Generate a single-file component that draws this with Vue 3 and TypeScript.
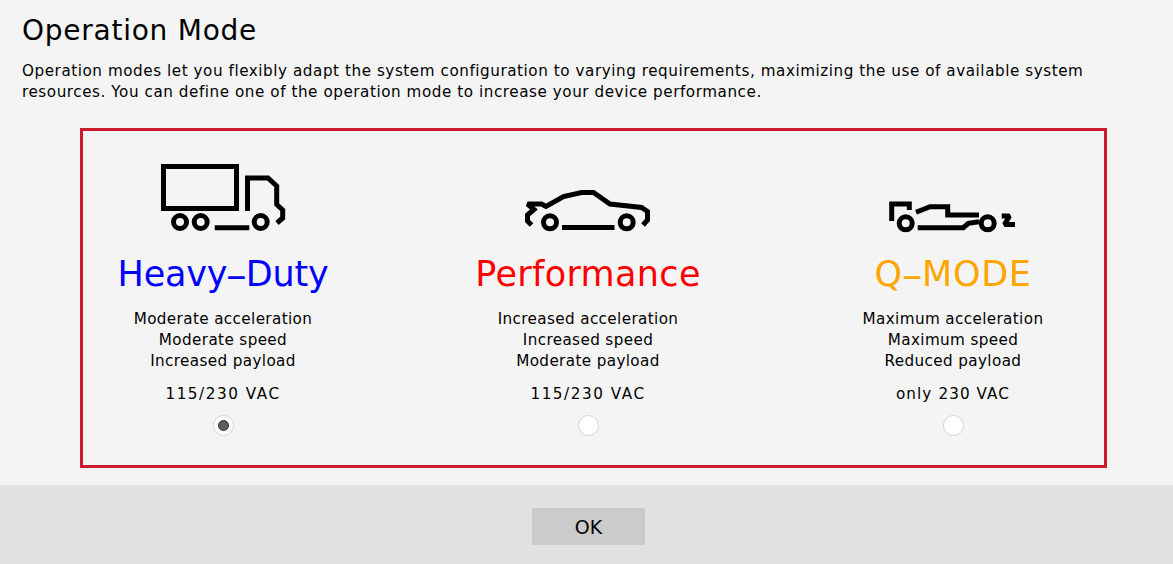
<script setup lang="ts">
interface Mode {
  head: string
  tail: string
  color: string
  nameSpacing: number
  lines: string[]
  power: string
  powerSpacing: number
  selected: boolean
  viewBox: string
  paths: string[]
  wheels: [number, number][]
}

const modes: Mode[] = [
  {
    head: 'Heavy',
    tail: 'Duty',
    color: '#0000ff',
    nameSpacing: -0.2,
    lines: ['Moderate acceleration', 'Moderate speed', 'Increased payload'],
    power: '115/230 VAC',
    powerSpacing: 1.55,
    selected: true,
    viewBox: '143 150 160 90',
    paths: [
      'M163.5 166.5H236.5V208.5H163.5Z',
      'M247.5 211V178H268L276.7 186V204.5L282.7 210V218L277 223',
      'M214.7 227.7H249.3',
    ],
    wheels: [[180, 222], [200.7, 222], [260.7, 222]],
  },
  {
    head: 'Performance',
    tail: '',
    color: '#ff0000',
    nameSpacing: 0.35,
    lines: ['Increased acceleration', 'Increased speed', 'Moderate payload'],
    power: '115/230 VAC',
    powerSpacing: 1.55,
    selected: false,
    viewBox: '508 150 160 90',
    paths: [
      'M531.5 225L527.5 221V215L534 209.5L527.5 204H541.5L546 206.5L563.5 196.5L581.5 192.5H593.5L610 204L641.5 207.5L647.5 211.5V220L643 225',
      'M562 227.5H614.5',
    ],
    wheels: [[550, 222.3], [626.7, 222.3]],
  },
  {
    head: 'Q',
    tail: 'MODE',
    color: '#ffa500',
    nameSpacing: 0.7,
    lines: ['Maximum acceleration', 'Maximum speed', 'Reduced payload'],
    power: 'only 230 VAC',
    powerSpacing: 1.1,
    selected: false,
    viewBox: '873 150 160 90',
    paths: [
      'M891.7 221V204H909.3V210',
      'M916 212.3L930 206.7H947.7V215H979',
      'M917.7 227.7H963.3L968.3 223.3L979 221.7',
      'M1001.7 216H1009.5L1004.5 224.5H1015',
    ],
    wheels: [[905.7, 223.3], [987.7, 223.3]],
  },
]
</script>

<template>
  <div class="page">
    <main class="content">
      <h1 class="title">Operation Mode</h1>
      <p class="intro">
        Operation modes let you flexibly adapt the system configuration to varying requirements, maximizing the use of available system<br />resources. You can define one of the operation mode to increase your device performance.
      </p>
      <section class="modes">
        <article v-for="mode in modes" :key="mode.head" class="mode">
          <svg class="icon" :viewBox="mode.viewBox" width="160" height="90" fill="none" stroke="#000" stroke-width="5" stroke-miterlimit="2" aria-hidden="true">
            <path v-for="d in mode.paths" :key="d" :d="d" />
            <circle v-for="w in mode.wheels" :key="w[0]" :cx="w[0]" :cy="w[1]" r="6.5" />
          </svg>
          <h2 class="name" :style="{ color: mode.color, letterSpacing: mode.nameSpacing + 'px' }">{{ mode.head }}<span v-if="mode.tail" class="dash">-</span>{{ mode.tail }}</h2>
          <ul class="features">
            <li v-for="line in mode.lines" :key="line">{{ line }}</li>
          </ul>
          <div class="power" :style="{ letterSpacing: mode.powerSpacing + 'px' }">{{ mode.power }}</div>
          <span class="radio" :class="{ selected: mode.selected }"></span>
        </article>
      </section>
    </main>
    <footer class="footer">
      <button class="ok" type="button">OK</button>
    </footer>
  </div>
</template>

<style>
html, body { margin: 0; background: #f4f4f4; }
</style>

<style scoped>
.page {
  width: 1173px;
  height: 564px;
  display: flex;
  flex-direction: column;
  background: #f4f4f4;
  color: #000;
  font-family: "DejaVu Sans", sans-serif;
  overflow: hidden;
}
.content {
  flex: 1;
  padding: 12px 22px 0;
}
.title {
  margin: 0;
  font-size: 28px;
  font-weight: 400;
  letter-spacing: 0.75px;
  line-height: 38px;
}
.intro {
  margin: 11px 0 0;
  white-space: nowrap;
  font-size: 15.2px;
  letter-spacing: 0.55px;
  line-height: 21px;
}
.modes {
  box-sizing: border-box;
  width: 1027px;
  height: 340px;
  margin: 25px 0 0 58px;
  border: 3px solid #cc1c2c;
  display: grid;
  grid-template-columns: repeat(3, 280px);
  column-gap: 85px;
}
.mode {
  display: flex;
  flex-direction: column;
  align-items: center;
  padding-top: 19px;
}
.icon { display: block; }
.name {
  margin: 11px 0 0;
  font-size: 35px;
  font-weight: 400;
  line-height: 46px;
}
.dash {
  display: inline-block;
  margin: 0 3px;
  transform: scaleX(1.8) translateY(1px);
}
.features {
  list-style: none;
  margin: 12px 0 0;
  padding: 0;
  text-align: center;
  font-size: 15.2px;
  letter-spacing: 0.38px;
  line-height: 21px;
}
.power {
  margin-top: 12px;
  font-size: 15.2px;
  line-height: 21px;
}
.radio {
  box-sizing: border-box;
  width: 21px;
  height: 21px;
  margin-top: 10px;
  border-radius: 50%;
  background: #fff;
  border: 1px solid #d4d4d4;
  display: flex;
  align-items: center;
  justify-content: center;
}
.radio.selected::after {
  content: "";
  width: 11px;
  height: 11px;
  border-radius: 50%;
  background: #5e5e5e;
  border: 1px solid #333;
  box-sizing: border-box;
}
.footer {
  height: 79px;
  background: #e2e2e2;
  display: flex;
  justify-content: center;
  padding-top: 23px;
  padding-left: 4px;
  box-sizing: border-box;
}
.ok {
  width: 113px;
  height: 37px;
  border: 0;
  padding: 0;
  background: #cbcbcb;
  color: #000;
  font-family: inherit;
  font-size: 19px;
}
</style>
